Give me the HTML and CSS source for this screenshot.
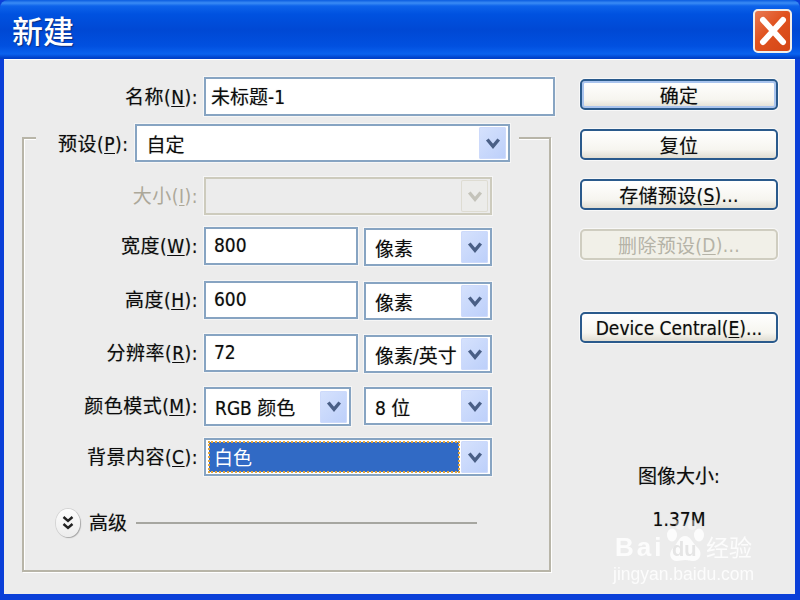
FILE: index.html
```html
<!DOCTYPE html>
<html lang="zh">
<head>
<meta charset="utf-8">
<title>新建</title>
<link rel="stylesheet" href="styles.css">
</head>
<body>
<div class="window">
  <header class="titlebar">
    <h1 class="title">新建</h1>
    <div class="close"><svg width="34" height="38" viewBox="0 0 34 38"><path d="M7 8 L27 30 M27 8 L7 30" stroke="#fff" stroke-width="6" stroke-linecap="round" fill="none"/></svg></div>
  </header>
  <main class="client">
    <section class="left">
      <div class="name-row">
        <div class="label name-label">名称(<u>N</u>):</div>
        <div class="field name-field">未标题-1</div>
      </div>
      <div class="group">
        <div class="legend">
          <div class="label">预设(<u>P</u>):</div>
          <div class="select preset"><span class="value">自定</span><span class="arrow"><svg class="chev" viewBox="0 0 14 11"><path d="M2 2 L7 8 L12 2" /></svg></span></div>
        </div>
        <div class="grid">
          <div class="label disabled">大小(<u>I</u>):</div>
          <div class="select span2 is-disabled"><span class="value"></span><span class="arrow"><svg class="chev" viewBox="0 0 14 11"><path d="M2 2 L7 8 L12 2" /></svg></span></div>

          <div class="label">宽度(<u>W</u>):</div>
          <div class="field">800</div>
          <div class="select unit"><span class="value">像素</span><span class="arrow"><svg class="chev" viewBox="0 0 14 11"><path d="M2 2 L7 8 L12 2" /></svg></span></div>

          <div class="label">高度(<u>H</u>):</div>
          <div class="field">600</div>
          <div class="select unit"><span class="value">像素</span><span class="arrow"><svg class="chev" viewBox="0 0 14 11"><path d="M2 2 L7 8 L12 2" /></svg></span></div>

          <div class="label">分辨率(<u>R</u>):</div>
          <div class="field">72</div>
          <div class="select unit"><span class="value">像素/英寸</span><span class="arrow"><svg class="chev" viewBox="0 0 14 11"><path d="M2 2 L7 8 L12 2" /></svg></span></div>

          <div class="label">颜色模式(<u>M</u>):</div>
          <div class="select mode"><span class="value">RGB 颜色</span><span class="arrow"><svg class="chev" viewBox="0 0 14 11"><path d="M2 2 L7 8 L12 2" /></svg></span></div>
          <div class="select"><span class="value">8 位</span><span class="arrow"><svg class="chev" viewBox="0 0 14 11"><path d="M2 2 L7 8 L12 2" /></svg></span></div>

          <div class="label">背景内容(<u>C</u>):</div>
          <div class="select span2 focused"><span class="value"><span class="selected">白色</span></span><span class="arrow"><svg class="chev" viewBox="0 0 14 11"><path d="M2 2 L7 8 L12 2" /></svg></span></div>
        </div>
        <div class="advanced">
          <div class="toggle"><svg width="14" height="16" viewBox="0 0 14 16"><path d="M2.5 2 L7 6 L11.5 2 M2.5 9 L7 13 L11.5 9" fill="none" stroke="#222" stroke-width="2.4"/></svg></div>
          <span class="adv-text">高级</span>
          <div class="adv-line"></div>
        </div>
      </div>
    </section>
    <aside class="right">
      <div class="button primary">确定</div>
      <div class="button">复位</div>
      <div class="button">存储预设(<u>S</u>)...</div>
      <div class="button btn-disabled">删除预设(<u>D</u>)...</div>
      <div class="button device">Device Central(<u>E</u>)...</div>
      <div class="size-label">图像大小:</div>
      <div class="size-value">1.37M</div>
    </aside>
  </main>
  <div class="watermark">
    <svg class="paw" width="46" height="46" viewBox="0 0 46 46"><g fill="#fff"><ellipse cx="11" cy="16" rx="5" ry="6.5"/><ellipse cx="19" cy="6" rx="4.5" ry="5" opacity=".45"/><ellipse cx="31" cy="6" rx="4.5" ry="5" opacity=".45"/><ellipse cx="38" cy="16" rx="5" ry="6.5"/><path d="M24 17 C30 17 31 24 37 29 C42 34 39 42 32 42 C28 42 27 41 24 41 C21 41 19 42 16 42 C9 42 7 34 12 29 C17 24 18 17 24 17 Z"/></g></svg>
    <div class="wm-brand"><span class="wm-bai">Bai</span><span class="wm-du">du</span><span class="wm-cn">经验</span></div>
    <div class="wm-url">jingyan.baidu.com</div>
  </div>
</div>
</body>
</html>
```
FILE: styles.css
```css
* { box-sizing: border-box; }
html, body { margin: 0; padding: 0; }
body {
  width: 800px;
  height: 600px;
  overflow: hidden;
  font-family: "DejaVu Sans Condensed", "DejaVu Sans", "Noto Sans CJK SC", sans-serif;
  font-size: 19px;
  color: #0c0c0c;
  text-shadow: 0 0 1px rgba(0, 0, 0, .35);
}
u { text-underline-offset: 2px; }

.window {
  position: relative;
  width: 800px;
  height: 600px;
  display: flex;
  flex-direction: column;
  background: #0a3fd8;
  overflow: hidden;
}
.titlebar {
  height: 59px;
  flex: none;
  display: flex;
  align-items: flex-start;
  justify-content: space-between;
  padding: 0 8px 0 12px;
  background: linear-gradient(#0a5ce0 0, #3a8cf5 3px, #0d63ea 6px, #0052e0 14px, #0048d4 30px, #0150e0 46px, #0a62ee 54px, #0040c8 58px);
  border-radius: 8px 8px 0 0;
}
.title {
  margin: 14px 0 0;
  font-family: "Noto Sans CJK SC", sans-serif;
  font-size: 31px;
  font-weight: 500;
  color: #fff;
  line-height: 1;
  text-shadow: 1px 1px 1px #0a2c80;
}
.close {
  width: 39px;
  height: 44px;
  margin-top: 9px;
  display: flex;
  align-items: center;
  justify-content: center;
  border: 2px solid #f2eee8;
  border-radius: 5px;
  background: linear-gradient(135deg, #e87a55, #e0521f 45%, #d44616);
}

.client {
  flex: 1;
  display: flex;
  margin: 0 5px 6px 4px;
  background: #ececec;
  box-shadow: inset 0 1px 0 #fff;
}
.left {
  width: 560px;
  flex: none;
  padding: 18px 0 0 18px;
}
.label {
  text-align: right;
  white-space: nowrap;
  letter-spacing: .5px;
  align-self: center;
  padding-bottom: 2px;
}
.disabled { color: #aca899; text-shadow: none; }
.name-row {
  display: flex;
  gap: 6px;
  height: 39px;
}
.name-label { width: 176px; }
.field, .select {
  height: 38px;
  display: flex;
  align-items: center;
  background: #fff;
  border: 2px solid #87a4c2;
  box-shadow: 0 0 0 1px #f6f6f6;
  white-space: nowrap;
}
.field { padding: 0 0 3px 8px; }
.name-field { width: 351px; height: 39px; padding-left: 5px; }

.group {
  width: 529px;
  height: 435px;
  margin-top: 21px;
  border: 2px solid #b8b5a8;
  box-shadow: 1px 1px 0 #fff, inset 1px 1px 0 #fff;
}
.legend {
  display: flex;
  align-items: center;
  gap: 7px;
  width: max-content;
  margin: -15px 0 0 12px;
  padding: 0 9px 0 22px;
  background: #ececec;
}
.preset { width: 375px; }
.value {
  flex: 1;
  min-width: 0;
  display: flex;
  align-items: center;
  height: 100%;
  padding: 0 0 0 9px;
}
.arrow {
  width: 27px;
  height: 32px;
  flex: none;
  margin-right: 2px;
  display: flex;
  align-items: center;
  justify-content: center;
  border-radius: 2px;
  background: linear-gradient(135deg, #d6e2fd, #bccffa);
  box-shadow: inset 0 0 0 1px #cddafb;
}
.chev { width: 16px; height: 13px; fill: none; stroke: #4a5f86; stroke-width: 3; }

.grid {
  display: grid;
  grid-template-columns: 174px 154px 128px;
  grid-template-rows: 50px 54px 53px 53px 51px 38px;
  column-gap: 6px;
  margin-top: 15px;
}
.grid .select, .grid .field { align-self: start; }
.grid .label { align-self: start; height: 38px; line-height: 38px; padding-bottom: 0; }
.grid .unit { margin-top: 1px; }
.span2 { grid-column: span 2; }
.mode { width: 147px; height: 39px; }
.is-disabled {
  background: #ececec;
  border-color: #cdcbbd;
}
.is-disabled .arrow { background: #ececea; box-shadow: inset 0 0 0 1px #dedcd2; }
.is-disabled .chev { stroke: #c4c3ba; }

.focused .value { padding: 2px 2px 2px 3px; }
.selected {
  display: flex;
  align-items: center;
  width: 100%;
  height: 100%;
  padding: 0 0 2px 5px;
  background: #316ac5;
  color: #fff;
  text-shadow: none;
  outline: 2px dotted #e2a53c;
  outline-offset: -1px;
}

.advanced {
  display: flex;
  align-items: center;
  width: 421px;
  height: 28px;
  margin: 33px 0 0 32px;
}
.toggle {
  width: 24px;
  height: 28px;
  flex: none;
  display: flex;
  align-items: center;
  justify-content: center;
  border-radius: 50%;
  background: linear-gradient(#fdfdfd, #ececec);
  box-shadow: 1px 1px 1px #a8a8a8, 0 0 0 1px #d4d4d4;
}
.adv-text { margin: 0 9px 0 9px; padding-bottom: 3px; }
.adv-line { flex: 1; height: 2px; background: #a6a6a0; }

.right {
  width: 198px;
  flex: none;
  margin-left: 16px;
  padding-top: 20px;
  display: flex;
  flex-direction: column;
  align-items: stretch;
}
.button {
  height: 31px;
  margin-bottom: 19px;
  flex: none;
  display: flex;
  align-items: center;
  justify-content: center;
  white-space: nowrap;
  letter-spacing: .3px;
  border: 2px solid #2a5a8c;
  border-radius: 5px;
  background: linear-gradient(#fff, #f6f5ef 70%, #e0ddd2);
  box-shadow: 0 0 0 1px #f8f8f8;
}
.primary { box-shadow: inset 0 0 0 2px #a9c4ee, 0 0 0 1px #f8f8f8; }
.btn-disabled {
  color: #b5b3a7;
  text-shadow: none;
  border-color: #cfcdc0;
  background: #f1f0e8;
}
.device { margin-top: 33px; letter-spacing: 0; }
.size-label { margin-top: 99px; text-align: center; }
.size-value { margin-top: 20px; text-align: center; }

.watermark {
  position: absolute;
  left: 613px;
  top: 519px;
  width: 146px;
  color: #fff;
  opacity: .85;
  text-shadow: none;
}
.paw { position: absolute; left: 48px; top: 0; }
.wm-brand {
  position: relative;
  display: flex;
  align-items: baseline;
  margin-top: 12px;
  padding-left: 2px;
  font-family: "Liberation Sans", sans-serif;
  font-size: 26px;
  font-weight: 700;
  line-height: 30px;
}
.wm-bai { width: 57px; letter-spacing: 3px; }
.wm-du { width: 34px; font-size: 20px; color: #e4e4e4; }
.wm-cn { font-family: "Noto Sans CJK SC", sans-serif; font-size: 23px; font-weight: 400; }
.wm-url {
  font-family: "Liberation Sans", sans-serif;
  font-size: 17.5px;
  line-height: 20px;
  white-space: nowrap;
}
```
